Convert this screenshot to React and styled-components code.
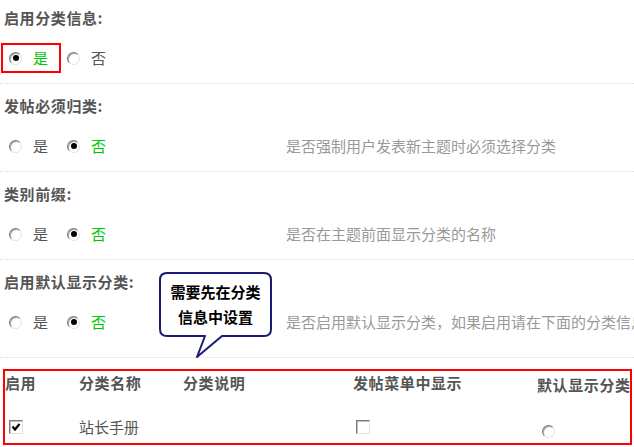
import React from "react";
import styled, { createGlobalStyle } from "styled-components";

const Global = createGlobalStyle`
  html, body {
    margin: 0;
    padding: 0;
    background: #fff;
    overflow: hidden;
  }
  body {
    font-family: "Noto Sans CJK SC", "Liberation Sans", sans-serif;
    font-size: 15px;
    color: #555;
  }
`;

const Page = styled.div`
  position: relative;
  width: 634px;
  height: 447px;
  overflow: hidden;
`;

const Section = styled.div`
  border-bottom: 1px dotted #cfdfec;
  padding-bottom: ${({ $last }) => ($last ? "22px" : "12px")};
`;

const Title = styled.div`
  padding: ${({ $first }) => ($first ? "9px" : "13px")} 0 0 4px;
  font-weight: 700;
  line-height: 18px;
  letter-spacing: 0.6px;
  color: #555;
  white-space: nowrap;
`;

const OptionRow = styled.div`
  display: grid;
  grid-template-columns: 283px 1fr;
  align-items: center;
  margin-top: 18px;
  padding-left: 3px;
  height: 26px;
`;

const Options = styled.div`
  display: flex;
  align-items: center;
`;

const Option = styled.label`
  display: inline-flex;
  align-items: center;
  box-sizing: border-box;
  height: 26px;
  padding: 0 11px 0 6px;
  margin-right: 2px;
  gap: 11px;
  outline: ${({ $boxed }) => ($boxed ? "2px solid #ff0000" : "none")};
  color: ${({ $on }) => ($on ? "#00c800" : "#555")};
  line-height: 18px;
`;

const Radio = styled.span`
  display: inline-flex;
  align-items: center;
  justify-content: center;
  box-sizing: border-box;
  width: 13px;
  height: 13px;
  border-radius: 50%;
  border: 1px solid;
  border-color: #7a7a7a #e2e2e2 #e2e2e2 #7a7a7a;
  box-shadow: inset 1px 1px 0 #a8a8a8;
  background: #fff;
  flex-shrink: 0;
  margin-top: ${({ $drop }) => $drop || 0};

  &::after {
    content: "";
    display: ${({ $on }) => ($on ? "block" : "none")};
    width: 6px;
    height: 6px;
    border-radius: 50%;
    background: #000;
  }
`;

const Hint = styled.div`
  color: #999;
  white-space: nowrap;
  line-height: 18px;
`;

const Box = styled.span`
  display: inline-flex;
  align-items: center;
  justify-content: center;
  box-sizing: border-box;
  width: 14px;
  height: 14px;
  border: 1px solid;
  border-color: #7a7a7a #e0e0e0 #e0e0e0 #7a7a7a;
  box-shadow: inset 1px 1px 0 #c0c0c0;
  background: #fff;
`;

const Table = styled.div`
  box-sizing: border-box;
  width: 629px;
  height: 76px;
  margin: 11px 0 0 3px;
  border: 2px solid #ff0000;
  display: grid;
  grid-template-columns: 74px 104px 170px 184px 1fr;
  grid-template-rows: 40px 32px;
  overflow: hidden;
`;

const Head = styled.div`
  padding-top: ${({ $drop }) => $drop || "3px"};
  font-weight: 700;
  letter-spacing: 0.6px;
  line-height: 18px;
  white-space: nowrap;
  overflow: hidden;
`;

const Cell = styled.div`
  display: flex;
  align-items: center;
  padding-left: ${({ $pad }) => $pad || 0};
  line-height: 18px;
  white-space: nowrap;
`;

const Bubble = styled.div`
  position: absolute;
  left: 158px;
  top: 271px;
  width: 116px;
  height: 88px;

  svg {
    position: absolute;
    inset: 0;
  }
`;

const BubbleText = styled.div`
  position: relative;
  width: 111px;
  margin-left: 2px;
  padding-top: 8px;
  text-align: center;
  font-weight: 700;
  line-height: 25px;
  color: #000;
`;

const sections = [
  { title: "启用分类信息:", on: 0, boxed: true },
  { title: "发帖必须归类:", on: 1, hint: "是否强制用户发表新主题时必须选择分类" },
  { title: "类别前缀:", on: 1, hint: "是否在主题前面显示分类的名称" },
  {
    title: "启用默认显示分类:",
    on: 1,
    hint: "是否启用默认显示分类，如果启用请在下面的分类信息中设置",
    last: true,
  },
];

function Check() {
  return (
    <svg width="10" height="10" viewBox="0 0 10 10">
      <path d="M1.5 4.5 L4 7.5 L8.5 2" fill="none" stroke="#000" strokeWidth="2.2" />
    </svg>
  );
}

export default function App() {
  return (
    <Page>
      <Global />
      {sections.map((s, i) => (
        <Section key={s.title} $last={s.last}>
          <Title $first={i === 0}>{s.title}</Title>
          <OptionRow>
            <Options>
              {["是", "否"].map((label, j) => (
                <Option key={label} $on={s.on === j} $boxed={s.boxed && j === 0}>
                  <Radio $on={s.on === j} />
                  {label}
                </Option>
              ))}
            </Options>
            {s.hint && <Hint>{s.hint}</Hint>}
          </OptionRow>
        </Section>
      ))}

      <Table>
        <Head>启用</Head>
        <Head>分类名称</Head>
        <Head>分类说明</Head>
        <Head>发帖菜单中显示</Head>
        <Head $drop="5px">默认显示分类</Head>

        <Cell $pad="4px">
          <Box>
            <Check />
          </Box>
        </Cell>
        <Cell>站长手册</Cell>
        <Cell />
        <Cell $pad="3px">
          <Box />
        </Cell>
        <Cell $pad="5px">
          <Radio $drop="8px" />
        </Cell>
      </Table>

      <Bubble>
        <svg width="116" height="88" viewBox="0 0 116 88">
          <path
            d="M9 2 H106 Q113 2 113 9 V58 Q113 65 106 65 H64 L39 86 L47 65 H9 Q2 65 2 58 V9 Q2 2 9 2 Z"
            fill="#fff"
            stroke="#1a1a7a"
            strokeWidth="2"
            strokeLinejoin="round"
          />
        </svg>
        <BubbleText>
          需要先在分类
          <br />
          信息中设置
        </BubbleText>
      </Bubble>
    </Page>
  );
}
